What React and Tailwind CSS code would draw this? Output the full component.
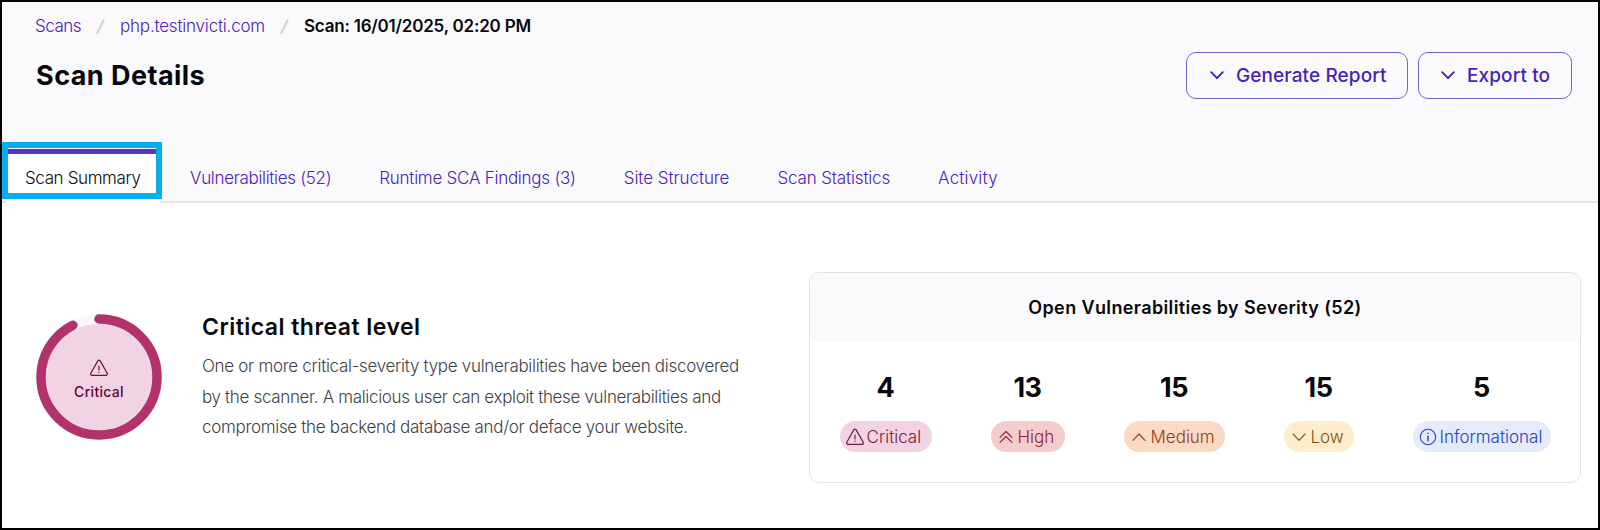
import clsx from 'clsx';

const tabs = [
    { label: 'Vulnerabilities (52)', tracking: 'tracking-[-0.32px]' },
    { label: 'Runtime SCA Findings (3)', tracking: 'tracking-[-0.25px]' },
    { label: 'Site Structure', tracking: 'tracking-[-0.06px]' },
    { label: 'Scan Statistics', tracking: 'tracking-[-0.15px]' },
    { label: 'Activity', tracking: 'tracking-[0.18px]' },
];

const severities = [
    { label: 'Critical', count: 4, icon: 'critical', pill: 'w-[92px] bg-[#f2d3e4] text-[#7a1840]' },
    { label: 'High', count: 13, icon: 'high', pill: 'w-[74px] bg-[#f4cccc] text-[#98203a]' },
    { label: 'Medium', count: 15, icon: 'medium', pill: 'w-[101px] bg-[#fcd9c4] text-[#913d14]' },
    { label: 'Low', count: 15, icon: 'low', pill: 'w-[70px] bg-[#feedcc] text-[#7d5310]' },
    { label: 'Informational', count: 5, icon: 'info', pill: 'w-[138px] bg-[#e6ebfc] text-[#2443bd]' },
];

function WarningIcon({ className }) {
    return (
        <svg className={className} viewBox="0 0 20 20" fill="none" stroke="currentColor" strokeWidth="1.2" strokeLinecap="round" strokeLinejoin="round">
            <path d="M8.8 2.9 1.8 15.2c-.6 1.1.1 2.1 1.2 2.1h14c1.1 0 1.8-1 1.2-2.1L11.2 2.9c-.6-1-1.8-1-2.4 0Z" />
            <path d="M10 8v4M10 14.2v.3" />
        </svg>
    );
}

function SeverityIcon({ type }) {
    if (type === 'critical') return <WarningIcon className="size-5 shrink-0" />;
    return (
        <svg className="size-5 shrink-0" viewBox="0 0 20 20" fill="none" stroke="currentColor" strokeWidth="1.1" strokeLinecap="round" strokeLinejoin="round">
            {type === 'high' && <path d="m4 10.3 6-5.8 6 5.8M4 15.3l6-5.8 6 5.8" />}
            {type === 'medium' && <path d="m4 13.3 6-6.3 6 6.3" />}
            {type === 'low' && <path d="m4 7 6 6.3L16 7" />}
            {type === 'info' && (
                <>
                    <circle cx="10" cy="10" r="7.7" />
                    <path d="M10 9.2v4.6M10 6.2v.4" strokeWidth="1.5" />
                </>
            )}
        </svg>
    );
}

function Slash({ className }) {
    return (
        <svg className={clsx('w-[9px] h-[15px] shrink-0', className)} viewBox="0 0 9 15" fill="none" stroke="#d3d0d0" strokeWidth="1.8">
            <path d="M8 .5 1 14.5" />
        </svg>
    );
}

function ActionButton({ children, className }) {
    return (
        <button className={clsx('flex items-center h-[47px] rounded-[10px] border border-[#7a62cb] text-[#4a1fb8] text-[19px] font-medium whitespace-nowrap', className)}>
            <svg className="w-[14px] h-[9px] mr-[12px] shrink-0" viewBox="0 0 14 9" fill="none" stroke="currentColor" strokeWidth="1.9" strokeLinecap="round" strokeLinejoin="round">
                <path d="m1.2 1.2 5.8 6 5.8-6" />
            </svg>
            <span className="pt-px">{children}</span>
        </button>
    );
}

function ThreatRing() {
    const length = 2 * Math.PI * 58;
    return (
        <div className="relative size-[126px] shrink-0">
            <svg className="size-full" viewBox="0 0 126 126" fill="none">
                <circle cx="63" cy="63" r="55" fill="#f2d3e4" />
                <circle cx="63" cy="63" r="58" stroke="#f9f9fc" strokeWidth="10" />
                <circle
                    cx="63"
                    cy="63"
                    r="58"
                    stroke="#b3326b"
                    strokeWidth="9.5"
                    strokeLinecap="round"
                    strokeDasharray={`${length * 0.924} ${length}`}
                    transform="rotate(-90 63 63)"
                />
            </svg>
            <div className="absolute inset-0 flex flex-col items-center pt-[44px] text-[#701035]">
                <WarningIcon className="size-[20px] mr-px" />
                <span className="mt-[4px] text-[14px] leading-[20px] font-medium tracking-[0.3px] text-[#5f0636]">Critical</span>
            </div>
        </div>
    );
}

export default function App() {
    return (
        <div className="h-[530px] w-[1600px] border-2 border-black bg-white font-[Inter,sans-serif] text-[#08080c] overflow-hidden">
            <header className="bg-[#fafafc]">
                <div className="flex items-center h-[36px] pt-[13px] pl-[33px] text-[17px] font-light text-[#4c20bb] whitespace-nowrap">
                    <a className="w-[61px] tracking-[-0.5px]">Scans</a>
                    <Slash className="mr-[15px]" />
                    <a className="w-[160px] tracking-[-0.2px]">php.testinvicti.com</a>
                    <Slash className="mr-[15px]" />
                    <span className="font-semibold tracking-[-0.21px] text-[#08080c]">Scan: 16/01/2025, 02:20 PM</span>
                </div>
                <div className="flex items-center mt-[14px] pl-[34px] pr-[26px]">
                    <h1 className="flex-1 pt-[2px] text-[27px] font-bold tracking-[0.45px]">Scan Details</h1>
                    <ActionButton className="w-[222px] pl-[23px] mr-[10px] tracking-[0.1px]">Generate Report</ActionButton>
                    <ActionButton className="w-[154px] pl-[22px] tracking-[0.1px]">Export to</ActionButton>
                </div>
                <nav className="flex mt-[50px] h-[54px] text-[17px] font-light text-[#4c20bb] whitespace-nowrap">
                    <div className="w-1 border-b-2 border-[#e5e5e5]" />
                    <div className="relative flex items-center w-[154px] pl-[19px] bg-white border-t-5 border-[#5c34bd] text-[#08080c] tracking-[-0.38px]">
                        <span className="pt-px">Scan Summary</span>
                        <div className="absolute -left-1 -top-3 w-[160px] h-[57px] border-6 border-[#06adef]" />
                    </div>
                    <div className="w-[6px] border-b-2 border-[#e5e5e5]" />
                    {tabs.map((tab) => (
                        <div key={tab.label} className={clsx('flex items-center px-6 pt-2 border-b-2 border-[#e5e5e5]', tab.tracking)}>
                            {tab.label}
                        </div>
                    ))}
                    <div className="flex-1 border-b-2 border-[#e5e5e5]" />
                </nav>
            </header>

            <main className="flex items-start pt-[69px] pl-[34px]">
                <div className="mt-[42px]">
                    <ThreatRing />
                </div>
                <div className="mt-[40px] ml-[40px] w-[607px] whitespace-nowrap">
                    <h2 className="text-[23px] leading-[30px] font-semibold tracking-[0.46px]">Critical threat level</h2>
                    <p className="mt-[9px] text-[17px] leading-[30.5px] font-light text-[#3f3f46]">
                        <span className="block tracking-[-0.3px]">One or more critical-severity type vulnerabilities have been discovered</span>
                        <span className="block tracking-[-0.34px]">by the scanner. A malicious user can exploit these vulnerabilities and</span>
                        <span className="block tracking-[-0.31px]">compromise the backend database and/or deface your website.</span>
                    </p>
                </div>
                <section className="w-[772px] h-[211px] rounded-[10px] border border-[#e5e5e7]">
                    <h3 className="flex items-center justify-center h-[69px] rounded-[9px] bg-[#fafafc] text-[18px] font-semibold tracking-[0.38px]">
                        Open Vulnerabilities by Severity (52)
                    </h3>
                    <div className="flex gap-[59px] pt-[31px] pl-[29.5px]">
                        {severities.map((s) => (
                            <div key={s.label} className="flex flex-col items-center">
                                <span className="text-[27px] leading-[30px] font-bold tracking-[-0.5px]">{s.count}</span>
                                <span className={clsx('flex items-center gap-[2px] mt-[18px] h-[31px] pl-[5px] rounded-full text-[17px] font-light', s.pill)}>
                                    <SeverityIcon type={s.icon} />
                                    <span className="pt-[2px]">{s.label}</span>
                                </span>
                            </div>
                        ))}
                    </div>
                </section>
            </main>
        </div>
    );
}
